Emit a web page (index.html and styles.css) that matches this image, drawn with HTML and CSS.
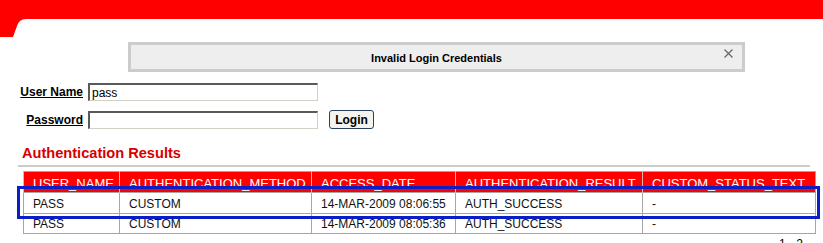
FILE: index.html
```html
<!DOCTYPE html>
<html>
<head>
<meta charset="utf-8">
<title>Login</title>
<link rel="stylesheet" href="styles.css">
</head>
<body>
<div class="page">
  <svg class="banner" width="823" height="37" viewBox="0 0 823 37" aria-hidden="true">
    <path d="M0 0 H823 V19 H26 Q19 19 17 26 L13 37 H0 Z" fill="#ff0000"/>
  </svg>

  <div class="message">
    <span class="message-text">Invalid Login Credentials</span>
    <svg class="close" width="9" height="9" viewBox="0 0 9 9" aria-hidden="true">
      <path d="M0.5 0.5 L8.5 8.5 M8.5 0.5 L0.5 8.5" stroke="#666" stroke-width="1.2"/>
    </svg>
  </div>

  <form class="login">
    <label class="label" for="u">User Name</label>
    <input class="field" id="u" type="text" value="pass">
    <span></span>
    <label class="label label-pw" for="p">Password</label>
    <input class="field" id="p" type="password">
    <button class="btn" type="button">Login</button>
  </form>

  <h2 class="section-title">Authentication Results</h2>
  <div class="rule"></div>

  <table class="results">
    <colgroup>
      <col class="c1"><col class="c2"><col class="c3"><col class="c4"><col class="c5">
    </colgroup>
    <thead>
      <tr class="head-row">
        <th>USER_NAME</th><th>AUTHENTICATION_METHOD</th><th>ACCESS_DATE</th><th>AUTHENTICATION_RESULT</th><th>CUSTOM_STATUS_TEXT</th>
      </tr>
    </thead>
    <tbody>
      <tr class="row1">
        <td>PASS</td><td>CUSTOM</td><td>14-MAR-2009 08:06:55</td><td>AUTH_SUCCESS</td><td>-</td>
      </tr>
      <tr class="row2">
        <td>PASS</td><td>CUSTOM</td><td>14-MAR-2009 08:05:36</td><td>AUTH_SUCCESS</td><td>-</td>
      </tr>
    </tbody>
  </table>

  <div class="pager">1 - 2</div>

  <div class="highlight"></div>
</div>
</body>
</html>
```

FILE: styles.css
```css
* { box-sizing: border-box; }

html, body {
  margin: 0;
  padding: 0;
  background: #ffffff;
}

body {
  font-family: "Liberation Sans", Arial, sans-serif;
  font-size: 12px;
  color: #000;
  overflow: hidden;
}

.page {
  position: relative;
  width: 823px;
  height: 243px;
  overflow: hidden;
}

.banner {
  display: block;
}

.message {
  position: relative;
  margin: 5px 0 0 128px;
  width: 617px;
  height: 30px;
  border: 3px solid #cccccc;
  background: #eeeeee;
  display: flex;
  align-items: center;
  justify-content: center;
}

.message-text {
  font-weight: bold;
  font-size: 11px;
  margin-top: 1px;
}

.close {
  position: absolute;
  right: 9px;
  top: 4px;
}

.login {
  display: grid;
  grid-template-columns: 65px 230px auto;
  column-gap: 5px;
  row-gap: 9px;
  align-items: center;
  margin: 11px 0 0 18px;
  width: max-content;
}

.label {
  justify-self: end;
  font-weight: bold;
  font-size: 12px;
  text-decoration: underline;
  color: #000;
}

.field {
  width: 230px;
  height: 18px;
  margin: 0;
  padding: 0 2px;
  border-width: 2px 1px 1px 2px;
  border-style: solid;
  border-color: #5a5a5a #d4d0c8 #d4d0c8 #5a5a5a;
  font-family: "Liberation Sans", Arial, sans-serif;
  font-size: 12px;
  color: #000;
  background: #fff;
}

.btn {
  margin-left: 6px;
  height: 19px;
  width: 45px;
  padding: 0;
  border: 1px solid #2b3f63;
  border-radius: 3px;
  background: #f4f3ee;
  font-family: "Liberation Sans", Arial, sans-serif;
  font-weight: bold;
  font-size: 12px;
  color: #000;
}

.section-title {
  margin: 16px 0 0 22px;
  font-size: 14.6px;
  line-height: 17px;
  font-weight: bold;
  color: #d80000;
}

.rule {
  margin: 3px 0 0 18px;
  width: 792px;
  height: 2px;
  background: #cccccc;
}

.results {
  margin: 4px 0 0 23px;
  width: 792px;
  border-collapse: collapse;
  table-layout: fixed;
  border: 1px solid #a6a6a6;
}

.c1 { width: 96px; }
.c2 { width: 192px; }
.c3 { width: 144px; }
.c4 { width: 187px; }
.c5 { width: 173px; }

.results th {
  background: #ff0000;
  color: #ffffff;
  font-weight: normal;
  font-size: 13px;
  text-align: left;
  padding: 4px 9px 0;
  height: 20px;
  line-height: 16px;
  white-space: nowrap;
  overflow: hidden;
  border-left: 1px solid #e8b0b0;
}

.results td {
  padding: 0 9px;
  line-height: 14px;
  border: 1px solid #a6a6a6;
  white-space: nowrap;
  overflow: hidden;
  color: #111;
}

.row1 td { height: 21px; padding-top: 2px; }
.row2 td { height: 20px; }

.pager {
  margin-top: 3px;
  width: 803px;
  text-align: right;
  font-size: 12px;
  line-height: 14px;
}

.highlight {
  position: absolute;
  left: 17px;
  top: 186px;
  width: 803px;
  height: 33px;
  border: 3px solid #0a1ec8;
}
```
